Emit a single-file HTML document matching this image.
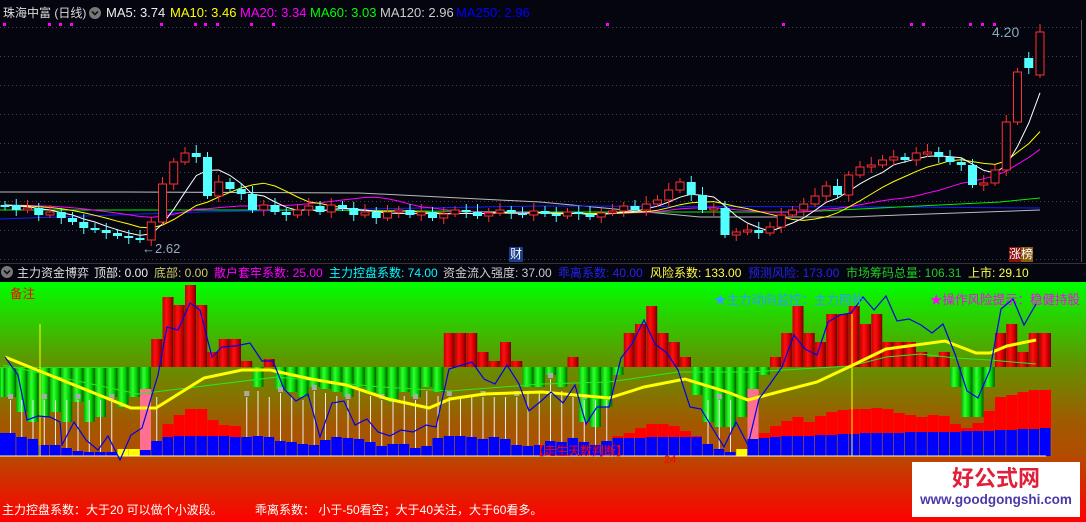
<!DOCTYPE html>
<html><head><meta charset="utf-8">
<style>
html,body{margin:0;padding:0;background:#05050f;}
body{width:1086px;height:522px;position:relative;overflow:hidden;font-family:"Liberation Sans","Noto Sans CJK SC",sans-serif;}
.t{position:absolute;white-space:nowrap;font-size:13px;line-height:16px;}
.i{font-size:12px;top:265px;}
#svg{position:absolute;left:0;top:0;}
</style></head><body>
<svg id="svg" width="1086" height="522" xmlns="http://www.w3.org/2000/svg">
<defs>
<linearGradient id="bg" x1="0" y1="0" x2="0" y2="1">
<stop offset="0" stop-color="#00ff00"/>
<stop offset="0.45" stop-color="#5e9600"/>
<stop offset="0.8" stop-color="#a15a00"/>
<stop offset="1" stop-color="#b24c00"/>
</linearGradient>
<linearGradient id="bg2" x1="0" y1="0" x2="0" y2="1">
<stop offset="0" stop-color="#b84800"/>
<stop offset="1" stop-color="#ff0000"/>
</linearGradient>
<linearGradient id="cr" x1="0" y1="0" x2="1" y2="0">
<stop offset="0" stop-color="#c00000"/><stop offset="0.35" stop-color="#ff1010"/><stop offset="0.7" stop-color="#d00000"/><stop offset="1" stop-color="#700000"/>
</linearGradient>
<linearGradient id="cg" x1="0" y1="0" x2="1" y2="0">
<stop offset="0" stop-color="#00b000"/><stop offset="0.35" stop-color="#30ff30"/><stop offset="0.7" stop-color="#00d000"/><stop offset="1" stop-color="#006000"/>
</linearGradient>
</defs>
<g id="main"></g>
<rect x="0" y="282" width="1086" height="175" fill="url(#bg)"/>
<rect x="0" y="457" width="1086" height="65" fill="url(#bg2)"/>
<g id="ind"></g>
<line x1="0" y1="263.5" x2="1086" y2="263.5" stroke="#333" />
<rect x="0" y="264" width="1086" height="18" fill="#05050f"/>
<line x1="1081.5" y1="20" x2="1081.5" y2="262" stroke="#555"/>
<rect x="509" y="247" width="14" height="15" fill="#1a3c8a"/>
<rect x="1009" y="247" width="12" height="15" fill="#8a1010"/>
<rect x="1021" y="247" width="12" height="15" fill="#8a5a10"/>
<circle cx="95" cy="13" r="6" fill="#777"/><path d="M92 11.5 L95 14.5 L98 11.5" stroke="#111" stroke-width="1.6" fill="none"/>
<circle cx="7" cy="272" r="6" fill="#777"/><path d="M4 270.5 L7 273.5 L10 270.5" stroke="#111" stroke-width="1.6" fill="none"/>
</svg>

<div class="t" style="left:3px;top:5px;color:#ddd;font-size:12px">珠海中富 (日线)</div>
<div class="t" style="left:106px;top:5px;color:#eee">MA5: 3.74</div>
<div class="t" style="left:170px;top:5px;color:#ffff00">MA10: 3.46</div>
<div class="t" style="left:240px;top:5px;color:#ff00ff">MA20: 3.34</div>
<div class="t" style="left:310px;top:5px;color:#00ff00">MA60: 3.03</div>
<div class="t" style="left:380px;top:5px;color:#ccc">MA120: 2.96</div>
<div class="t" style="left:456px;top:5px;color:#0000ff">MA250: 2.96</div>
<div class="t" style="left:992px;top:24px;color:#8ab;font-size:14px">4.20</div>
<div class="t" style="left:142px;top:241px;color:#9ab;font-size:13px">←2.62</div>
<div class="t" style="left:510px;top:247px;color:#fff;font-size:12px;line-height:15px">财</div>
<div class="t" style="left:1009px;top:247px;color:#fff;font-size:12px;line-height:15px">涨榜</div>

<div class="t i" style="left:17px;color:#ddd">主力资金博弈</div>
<div class="t i" style="left:94px;color:#eee">顶部: 0.00</div>
<div class="t i" style="left:154px;color:#cccc66">底部: 0.00</div>
<div class="t i" style="left:214px;color:#ff00ff">散户套牢系数: 25.00</div>
<div class="t i" style="left:329px;color:#00ffff">主力控盘系数: 74.00</div>
<div class="t i" style="left:443px;color:#ccc">资金流入强度: 37.00</div>
<div class="t i" style="left:558px;color:#2222ee">乖离系数: 40.00</div>
<div class="t i" style="left:650px;color:#ffff44">风险系数: 133.00</div>
<div class="t i" style="left:748px;color:#2222ee">预测风险: 173.00</div>
<div class="t i" style="left:846px;color:#22cc22">市场筹码总量: 106.31</div>
<div class="t i" style="left:968px;color:#ffff44">上市: 29.10</div>

<div class="t" style="left:10px;top:286px;color:#ff0000;font-size:12.5px">备注</div>
<div class="t" style="left:714px;top:292px;color:#3399ff;font-size:12.5px">★主力动向监控：主力回补</div>
<div class="t" style="left:930px;top:292px;color:#ff00ff;font-size:12.5px">★操作风险提示：稳健持股</div>
<div class="t" style="left:532px;top:443px;color:#ff0000;font-size:12px">【走生天数判断】</div>
<div class="t" style="left:664px;top:452px;color:#ff0000;font-size:11px">24</div>
<div class="t" style="left:2px;top:502px;color:#fff;font-size:12px">主力控盘系数：大于20 可以做个小波段。</div>
<div class="t" style="left:255px;top:502px;color:#fff;font-size:12px">乖离系数： 小于-50看空；大于40关注，大于60看多。</div>
<div style="position:absolute;left:912px;top:462px;width:168px;height:55px;background:#fff"></div>
<div class="t" style="left:912px;top:466px;width:168px;text-align:center;color:#e0203a;font-size:22px;line-height:26px;font-weight:bold">好公式网</div>
<div class="t" style="left:912px;top:492px;width:168px;text-align:center;color:#4a3aa8;font-size:13.5px;font-weight:bold">www.goodgongshi.com</div>

<script>
(function(){
var P=11.25,X0=5,N=93;
function cx(i){return X0+P*i;}
var cl=[205,210,208,215,212,218,222,228,230,233,236,238,240,222,184,162,153,157,196,182,189,194,210,205,212,215,210,206,212,205,208,215,212,218,212,210,215,212,218,214,210,212,216,213,210,213,215,211,214,216,212,214,217,213,211,206,210,204,200,190,182,195,210,208,235,232,230,233,227,215,210,204,196,186,195,175,167,165,160,157,160,153,152,157,162,165,168,185,183,170,122,72,68,32];
cl=cl.slice(0,93);cl[89]=122;cl[90]=72;cl[91]=68;cl[92]=32;cl[88]=170;cl[87]=183;cl[86]=185;
var s='';
[27,56,85,114,143,172,201,230,259].forEach(function(y){s+='<line x1="0" y1="'+y+'.5" x2="1080" y2="'+y+'.5" stroke="#444" stroke-dasharray="1,3"/>';});
[3,48,59,70,160,194,204,216,250,272,606,782,910,922,969,981,993].forEach(function(x){s+='<rect x="'+x+'" y="23" width="3" height="3" fill="#ff00ff"/>';});
function ma(n,pad){var o=[];for(var i=0;i<N;i++){var sum=0;for(var k=0;k<n;k++){var j=i-k;sum+=j>=0?cl[j]:pad;}o.push(sum/n);}return o;}
function pl(arr,col,w){var p='';for(var i=0;i<arr.length;i++)p+=(i?'L':'M')+cx(i).toFixed(1)+' '+arr[i].toFixed(1);return '<path d="'+p+'" stroke="'+col+'" stroke-width="'+(w||1)+'" fill="none"/>';}
function pts(a,col,w){var p='';for(var i=0;i<a.length;i+=2)p+=(i?'L':'M')+a[i]+' '+a[i+1];return '<path d="'+p+'" stroke="'+col+'" stroke-width="'+(w||1)+'" fill="none"/>';}
s+=pts([0,192,120,192,360,193,540,202,700,217,850,217,900,215,1040,210],'#bbb');
s+=pts([0,219,200,212,540,206,900,207,1040,208],'#1020ff');
s+=pts([0,210,300,210,540,212,800,212,1000,202,1040,198],'#00ee00');
s+=pl(ma(20,205),'#ff00ff');
s+=pl(ma(10,205),'#ffff00');
s+=pl(ma(5,205),'#ffffff');
for(var i=0;i<N;i++){
 var o=i?cl[i-1]:205,c=cl[i];
 if(i==91)o=58; if(i==92)o=75;
 var x=cx(i),up=c<o,top=Math.min(o,c),bot=Math.max(o,c);if(bot-top<2)bot=top+2;
 var hi=top-4-(i*7%5),lo=bot+3+(i*3%6);
 var col=up?'#ff3030':'#54ffff';
 s+='<line x1="'+x+'" y1="'+hi+'" x2="'+x+'" y2="'+lo+'" stroke="'+col+'"/>';
 if(up)s+='<rect x="'+(x-4)+'" y="'+top+'" width="8" height="'+(bot-top)+'" fill="#05050f" stroke="'+col+'"/>';
 else s+='<rect x="'+(x-4.5)+'" y="'+top+'" width="9" height="'+(bot-top)+'" fill="'+col+'"/>';
}
document.getElementById('main').innerHTML=s;

var colv=[-30,-45,-55,-50,-45,-55,-35,-55,-50,-30,-40,-30,-35,28,70,62,82,62,15,28,28,6,-20,8,-22,-25,-30,-20,-22,-25,-30,-20,-25,-30,-35,-25,-30,-20,-25,34,34,34,15,6,25,6,-20,-20,-8,-20,10,-55,-60,-40,-8,34,43,61,34,25,10,-28,-55,-60,-60,-50,-28,-8,10,34,61,34,25,53,53,61,43,53,25,25,25,15,10,15,-20,-50,-50,-20,34,43,15,34,34];
var blue=[433,437,439,445,445,448,451,452,452,452,455,455,450,441,437,436,436,436,436,436,437,437,436,437,441,442,444,445,440,437,438,439,442,446,444,444,448,446,438,436,436,437,439,437,439,445,446,445,441,442,438,442,445,441,438,438,438,437,437,437,437,437,444,449,452,454,439,438,437,436,436,436,435,435,434,434,433,433,433,433,432,432,432,432,432,431,431,431,430,430,429,429,428];
var red={14:424,15:415,16:409,17:409,18:420,19:425,20:426,54:436,55:433,56:428,57:424,58:424,59:426,60:431,61:436,67:433,68:426,69:421,70:417,71:422,72:416,73:412,74:410,75:409,76:409,77:408,78:409,79:413,80:415,81:417,82:415,83:416,84:424,85:428,86:423,87:411,88:397,89:395,90:392,91:390,92:390};
var t='',B=367,BOT=456;
function L(i){return cx(i);}
for(var i=0;i<N;i++){
 var x=L(i),v=colv[i];
 if(v>0)t+='<rect x="'+x+'" y="'+(B-v)+'" width="11" height="'+v+'" fill="url(#cr)"/>';
 else if(v<0)t+='<rect x="'+x+'" y="'+B+'" width="11" height="'+(-v)+'" fill="url(#cg)"/>';
}
t+='<rect x="0" y="367" width="5" height="30" fill="url(#cg)"/>';
t+='<line x1="0" y1="367.5" x2="120" y2="367.5" stroke="#22dd22"/>';
for(var i=0;i<N;i++){
 var x=L(i),bt=blue[i];
 if(!red[i]&&i!=10&&i!=11&&i!=12&&i!=65&&i!=66){var yy=Math.max(B-colv[i],B)+ (colv[i]<0?4:30);
  t+='<line x1="'+(x+5.5)+'" y1="'+Math.min(yy,400)+'" x2="'+(x+5.5)+'" y2="'+bt+'" stroke="#eee"/>';
  if(i%3==0)t+='<rect x="'+(x+3)+'" y="'+(Math.min(yy,400)-6)+'" width="5" height="5" fill="#aaa"/>';}
 if(red[i])t+='<rect x="'+x+'" y="'+red[i]+'" width="11" height="'+(bt-red[i])+'" fill="#ff0000"/>';
 if(i==12||i==66)t+='<rect x="'+x+'" y="389" width="11" height="'+(bt-389)+'" fill="#ff7090"/>';
 if(i==10||i==11||i==65)t+='<rect x="'+x+'" y="449" width="11" height="7" fill="#ffff00"/>';
 else t+='<rect x="'+x+'" y="'+bt+'" width="11" height="'+(BOT-bt)+'" fill="#0000ff"/>';
 t+='<line x1="'+(x+11)+'" y1="'+bt+'" x2="'+(x+11)+'" y2="'+BOT+'" stroke="#c07000" stroke-width="0.7"/>';
}
t+='<rect x="0" y="433" width="5" height="23" fill="#0000ff"/>';
t+='<line x1="0" y1="456" x2="1046" y2="456" stroke="#ffffaa"/>';
t+='<line x1="40" y1="324" x2="40" y2="456" stroke="#ffff00"/>';
t+='<line x1="852" y1="314" x2="852" y2="456" stroke="#ffff00"/>';
t+=pts([3,365,138,394,277,377,381,387,450,391,542,384,609,382,678,372,748,372,817,368,851,366,886,357,921,354,955,358,990,360,1036,364],'#22ee22');
t+=pts([5,357,131,408,156,408,204,378,242,370,270,370,311,379,346,385,388,399,429,408,450,399,484,394,542,392,609,398,644,387,685,379,727,392,748,400,782,391,817,382,851,366,886,349,945,341,976,353,990,353,1007,346,1036,340],'#ffff00',3);
t+=pts([5,357,18,375,27,420,38,416,50,417,60,422,62,445,74,422,86,440,98,450,108,436,120,460,131,435,142,428,158,375,167,327,178,330,190,303,200,310,212,357,222,347,235,346,250,343,262,361,273,361,284,389,296,401,308,394,320,437,332,403,344,401,355,425,367,419,378,432,390,436,401,430,413,432,426,425,436,427,449,369,472,362,484,379,495,384,507,365,519,384,529,411,540,402,551,392,563,403,575,385,586,424,597,407,609,407,621,358,632,344,644,320,655,344,667,353,678,370,690,407,701,409,713,429,724,447,736,422,748,445,759,399,770,384,782,367,794,335,805,349,817,355,828,322,840,315,851,313,863,297,874,310,886,296,897,321,909,319,921,325,932,333,943,324,955,354,967,391,978,398,990,370,1001,309,1013,299,1024,325,1036,304],'#0000ee',1.2);
document.getElementById('ind').innerHTML=t;
})();
</script>
</body></html>
